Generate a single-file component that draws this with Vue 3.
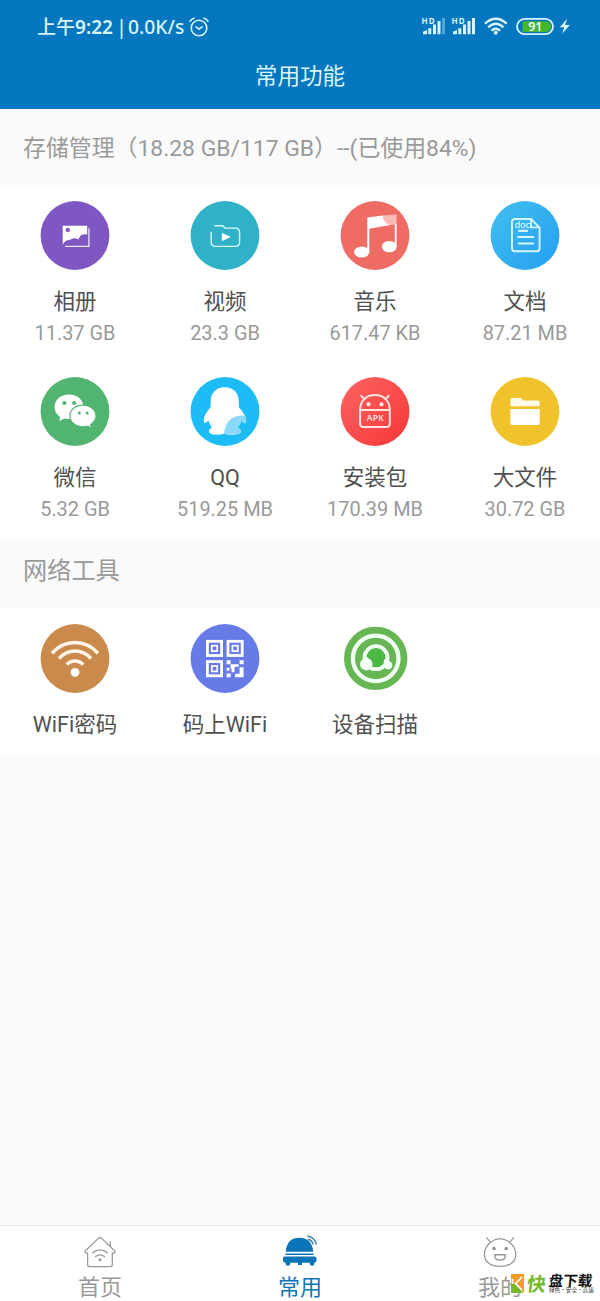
<script setup>
const storage = [
  { icon: 'album', label: '相册', size: '11.37 GB' },
  { icon: 'video', label: '视频', size: '23.3 GB' },
  { icon: 'music', label: '音乐', size: '617.47 KB' },
  { icon: 'doc', label: '文档', size: '87.21 MB' },
  { icon: 'wechat', label: '微信', size: '5.32 GB' },
  { icon: 'qq', label: 'QQ', size: '519.25 MB' },
  { icon: 'apk', label: '安装包', size: '170.39 MB' },
  { icon: 'folder', label: '大文件', size: '30.72 GB' },
]
const network = [
  { icon: 'wifi', label: 'WiFi密码' },
  { icon: 'qr', label: '码上WiFi' },
  { icon: 'scan', label: '设备扫描' },
]
const sections = [
  { key: 'storage', title: '存储管理（18.28 GB/117 GB）--(已使用84%)', items: storage },
  { key: 'network', title: '网络工具', items: network },
]
</script>

<template>
  <div class="screen">
    <header class="top">
      <div class="status">
        <span class="clock">上午<span class="digits">9:22</span></span><span class="bar">|</span><span class="speed">0.0K/s</span>
        <svg class="alarm" width="20" height="20" viewBox="0 0 20 20" fill="none" stroke="#d8f4ff" stroke-width="1.6" stroke-linecap="round">
          <circle cx="10" cy="11" r="7.8" />
          <path d="M1 4.2 Q2.4 2 5 1.2M19 4.2Q17.6 2 15 1.2M7.2 9.8l2.8 2.4 3-2.4" />
        </svg>
        <svg class="indicators" width="152" height="24" viewBox="0 0 152 24">
          <g class="sig">
            <text x="1.5" y="8.7" textLength="13">HD</text>
            <path d="M3 19.2v-2.4l4-1.8v4.2zM8.3 19.2v-6h3v6zM13 19.2V9.5h3v9.7zM17.5 19.2V6h3v13.2z" />
            <path opacity=".38" d="M22 19.2V3h3v16.2z" />
          </g>
          <g class="sig" transform="translate(30 0)">
            <text x="1.5" y="8.7" textLength="13">HD</text>
            <path d="M3 19.2v-2.4l4-1.8v4.2zM8.3 19.2v-6h3v6zM13 19.2V9.5h3v9.7zM17.5 19.2V6h3v13.2zM22 19.2V3h3v16.2z" />
          </g>
          <g fill="none" stroke="#d8f4ff" stroke-width="2.4">
            <path d="M64.9 8.7Q75.8-1.3 86.7 8.7M68.2 12.3Q75.8 5.3 83.4 12.3M71.4 15.7Q75.8 11.8 80.2 15.7" />
          </g>
          <circle cx="75.8" cy="17.8" r="2" fill="#d8f4ff" />
          <rect x="97" y="3.8" width="36" height="15.4" rx="7.7" fill="none" stroke="#d8f4ff" stroke-width="1.8" />
          <path d="M102.500 6.200H126Q131 6.800 131 11.500T126 17H102.500Z" fill="#43b52f" />
          <text class="pct" x="115.3" y="15.9" text-anchor="middle">91</text>
          <path d="M147 3.8l-7.2 8.4h4.4l-2 6.6 7.6-8.8h-4.6z" fill="#d8f4ff" />
        </svg>
      </div>
      <h1>常用功能</h1>
    </header>

    <main>
      <section v-for="s in sections" :key="s.key" :class="s.key">
        <h2>{{ s.title }}</h2>
        <div class="grid">
          <div v-for="it in s.items" :key="it.icon" class="cell">
            <svg class="icon" width="70" height="70" viewBox="0 0 70 70">
              <template v-if="it.icon === 'album'">
                <circle cx="35" cy="34.5" r="34.4" fill="#7e57c2" />
                <path fill="#fff" fill-rule="evenodd" d="M22.7 24.8H47.2V33.6Q40.8 31.6 38.3 38.6Q34 35.6 29.5 39.2Q26.5 38.2 22.7 43.5ZM27.8 26.8a2.2 2.2 0 1 0 .01 0Z" />
                <path d="M48.9 27.2V45.4H25" fill="none" stroke="#eee6fa" stroke-width="1.3" />
              </template>
              <template v-else-if="it.icon === 'video'">
                <circle cx="35" cy="34.5" r="34.4" fill="#30b1c7" />
                <path d="M21.2 30.8V41Q21.2 45.4 25.6 45.4H45.2Q49.6 45.4 49.6 41V31.5Q49.6 27.1 45.2 27.1H35L32.7 24.7H24.5" fill="none" stroke="#d9fbff" stroke-width="1.4" />
                <path d="M31.8 31.7L40.7 36 31.8 40.3Z" fill="#fff" />
              </template>
              <template v-else-if="it.icon === 'music'">
                <circle cx="35" cy="34.5" r="34.4" fill="#ee6c64" />
                <path fill="#fff" d="M27.3 16.4L43 14.5Q43.5 21.5 50.5 24.1L29.3 27.7V51H27.3Z" />
                <path fill="#f9bbb5" d="M43 14.5L56.6 13.4V23.2L50.5 24.1Q43.5 21.5 43 14.5Z" />
                <path fill="#fff" d="M54.8 23H56.6V45.5H54.8Z" />
                <ellipse cx="21.7" cy="51" rx="7.6" ry="5.6" fill="#fff" />
                <ellipse cx="49.3" cy="45.6" rx="7.4" ry="5.7" fill="#fff" />
              </template>
              <template v-else-if="it.icon === 'doc'">
                <defs><linearGradient id="docg" x1="0" y1="0" x2="1" y2="1"><stop offset="0" stop-color="#41bfee" /><stop offset="1" stop-color="#259ff2" /></linearGradient></defs>
                <circle cx="35" cy="34.5" r="34.4" fill="url(#docg)" />
                <path d="M41 18H25Q22 18 22 21V47.3Q22 50.3 25 50.3H46.6Q49.6 50.3 49.6 47.3V26.6L41 18V26.4H49.6" fill="none" stroke="#d7f5ff" stroke-width="1.9" stroke-linejoin="round" />
                <path d="M29 29.8H37.2M28.2 36H43.2M28.8 42.5H43.2" stroke="#d7f5ff" stroke-width="2.2" stroke-linecap="round" />
                <text x="24.6" y="26.8" class="doc-text" textLength="15.6">doc</text>
              </template>
              <template v-else-if="it.icon === 'wechat'">
                <circle cx="35" cy="34.5" r="34.4" fill="#51b471" />
                <path fill="#fff" d="M29 17.4c-8.300 0-14.500 5.300-14.500 12.600 0 4 2 7.300 5.400 9.700L19.400 44l5-2.600c1.500.5 3 .7 4.600.7 8.300 0 14.500-5 14.500-12.100S37.300 17.400 29 17.400Z" />
                <path fill="#fff" stroke="#51b471" stroke-width="1.1" d="M43 28.100c-7.400 0-13.100 4.800-13.100 10.900S35.600 49.900 43 49.900c1.700 0 3.400-.3 4.900-.8L51.300 51.700l-.7-4.200c3.300-2 5.400-5 5.400-8.500 0-6.100-5.700-10.900-13-10.900Z" />
                <g fill="#51b471"><circle cx="24.400" cy="26" r="2.100" /><circle cx="34.200" cy="26" r="2.100" /><circle cx="39.300" cy="36" r="1.500" /><circle cx="47.200" cy="36" r="1.500" /></g>
              </template>
              <template v-else-if="it.icon === 'qq'">
                <circle cx="35" cy="34.5" r="34.4" fill="#1dbcf7" />
                <path fill="#fff" d="M34.700 10.300C25.800 10.300 20.700 16.500 20.700 24.500V30Q13 39 13.700 44Q14.200 48 18.500 43.500Q19.500 47.500 22 50.500Q18.600 52.300 19 54.800C19.500 58.500 30.500 58.300 34.200 56.500C38 58.300 50.500 58.500 50.800 54.500Q51 52.200 47.500 50.500Q50.500 47.500 51.300 43.500Q55.300 47.800 56 44Q56.500 39 48.800 30V24.500C48.800 16.500 43.600 10.300 34.700 10.300Z" />
                <path fill="#8bd8fb" d="M34 56.500Q35.500 40.500 50 38.500Q54.500 38 55.800 39.500Q57.300 46 54.500 46.500L51.300 43.700Q50.500 47.500 47.700 50.500Q51 52.500 50.800 54.500Q50 57.600 42.500 57.600Q37 57.800 34 56.500Z" />
              </template>
              <template v-else-if="it.icon === 'apk'">
                <defs><linearGradient id="apkg" x1="0" y1="0" x2="1" y2="1"><stop offset="0" stop-color="#fc6563" /><stop offset="1" stop-color="#f73637" /></linearGradient></defs>
                <circle cx="35" cy="34.5" r="34.4" fill="url(#apkg)" />
                <path d="M20.100 33V46.500Q20.100 50 23.600 50H46.300Q49.800 50 49.800 46.500V33C49.800 24 44 18 35 18S20.100 24 20.100 33H49.800M24.700 22.200L21.200 18.800M45.300 22.200L48.800 18.800" fill="none" stroke="#ffe4e1" stroke-width="1.900" stroke-linecap="round" />
                <circle cx="28.500" cy="27.300" r="2" fill="#fff" /><circle cx="41.500" cy="27.300" r="2" fill="#fff" />
                <text x="26.700" y="44.300" class="apk-text" textLength="17">APK</text>
              </template>
              <template v-else-if="it.icon === 'folder'">
                <circle cx="35" cy="34.5" r="34.4" fill="#f0c32c" />
                <path fill="#fffbea" d="M20.400 29.300V22.800Q20.400 21 22.200 21H31L33.300 23.400H47.900Q49.700 23.400 49.700 25.200V29.300Z" />
                <path fill="#fff" d="M20.400 32H49.700V46.300Q49.700 48 48 48H22.100Q20.400 48 20.400 46.300Z" />
              </template>
              <template v-else-if="it.icon === 'wifi'">
                <circle cx="35" cy="34.5" r="34.4" fill="#c98a4c" />
                <path d="M12 29.300C25 15 45 15 58 29.300M19 34.500C28 24.500 42 24.500 51 34.500M26.800 40.600C31 35.700 39 35.700 43.200 40.600" fill="none" stroke="#fff5e8" stroke-width="3.500" />
                <circle cx="35" cy="48.300" r="4.400" fill="#fff" />
              </template>
              <template v-else-if="it.icon === 'qr'">
                <circle cx="35" cy="34.5" r="34.4" fill="#677be7" />
                <g fill="none" stroke="#fff" stroke-width="2.800"><rect x="17.400" y="17.300" width="14.200" height="14.200" /><rect x="38" y="17.300" width="14.200" height="14.200" /><rect x="17.400" y="37.600" width="14.200" height="14.200" /></g>
                <g fill="none" stroke="#fff" stroke-width="1.700"><rect x="21.800" y="21.700" width="5.400" height="5.400" /><rect x="42.400" y="21.700" width="5.400" height="5.400" /><rect x="21.800" y="42" width="5.400" height="5.400" /></g>
                <path fill="#fff" d="M36.600 36.200h4v4h-4zM40.600 40.200h4v8h-3v-3.500h-1zM44.600 40.200h4v2.500h-4zM49.600 36.200h4v4h-4zM36.600 43.800h3v3h-3zM36.600 49.500h4v3.700h-4zM49.600 43.200h4v10h-8.500v-3.500h4.500z" />
              </template>
              <template v-else>
                <circle cx="35.700" cy="34.400" r="31.700" fill="#67b654" />
                <circle cx="35.700" cy="34.400" r="22.800" fill="none" stroke="#effff0" stroke-width="4.300" />
                <circle cx="36" cy="33.700" r="11.500" fill="#4bb843" stroke="#f2fff2" stroke-width="3.800" />
                <path d="M26.500 35.500L23 39M46 37L49 40" stroke="#f2fff2" stroke-width="4.500" stroke-linecap="round" />
                <circle cx="26.300" cy="40.200" r="6.200" fill="#f2fff2" />
                <circle cx="48.200" cy="41.300" r="4.100" fill="#f2fff2" />
              </template>
            </svg>
            <div class="label">{{ it.label }}</div>
            <div v-if="it.size" class="size">{{ it.size }}</div>
          </div>
        </div>
      </section>
    </main>

    <nav>
      <div class="tab">
        <svg width="36" height="36" viewBox="0 0 36 36" fill="none" stroke="#999" stroke-width="1.300" stroke-linejoin="round" stroke-linecap="round">
          <path d="M5.600 19V30.500Q5.600 32.600 7.700 32.600H28.200Q30.300 32.600 30.300 30.500V19M5.600 19Q1.500 19.300 3.400 16.800L16.400 4.400Q18 3 19.600 4.400L32.600 16.800Q34.500 19.300 30.300 19M28.400 12.500V8" />
          <path d="M10.600 18.800Q18 13 25.400 18.800M13.500 22.600Q18 19.100 22.500 22.600" /><circle cx="18" cy="25.800" r=".9" fill="#999" />
        </svg>
        <span>首页</span>
      </div>
      <div class="tab active">
        <svg width="36" height="36" viewBox="0 0 36 36">
          <path fill="#0b75b9" d="M3.800 17.800C4.500 8 9.700 3.800 17.400 3.800S30.500 8 31.200 17.800ZM3.500 19.500H31.500V21H3.500ZM2.500 22.500H32.500Q34.500 22.500 34.500 24.500V26.500Q34.500 28.500 32.500 28.500L31.800 31.500H28.500L27.500 28.800H20V31H16V28.800H8.500L7.500 31.500H4.200L3.200 28.500Q1 28.300 1 26.500V24.500Q1 22.500 2.500 22.500Z" />
          <path d="M25.300 2Q32.800 3.200 34.300 10.500M26 5.200Q30.300 6.300 31.300 10.500" fill="none" stroke="#3d81a9" stroke-width="1.400" />
        </svg>
        <span>常用</span>
      </div>
      <div class="tab">
        <svg width="36" height="36" viewBox="0 0 36 36" fill="none" stroke="#999" stroke-width="1.300" stroke-linecap="round" stroke-linejoin="round">
          <path d="M18.100 4.800C26 4.800 33.800 12 33.800 20.500 33.800 28 27.500 32.400 18.100 32.400S2.400 28 2.400 20.500C2.400 12 10.200 4.800 18.100 4.800ZM8.200 7.800L4.800 3.800M28 7.800L31.400 3.800" />
          <path d="M12.800 20.700H23.400Q24 26 18.100 26T12.800 20.700Z" stroke-width="1.500" />
          <circle cx="12" cy="14.500" r="1.200" fill="#999" /><circle cx="24.200" cy="14.500" r="1.200" fill="#999" />
        </svg>
        <span>我的</span>
      </div>
      <div class="watermark">
        <svg width="13" height="19" viewBox="0 0 13 19">
          <path fill="#f59a23" d="M0 0H13V19L5 10 0 9Z" /><path fill="#76b82a" d="M0 8L5 10 12 19H0Z" />
          <path d="M11 3L4.500 9.500 11 16M1.500 5V10" fill="none" stroke="#fff" stroke-width="1.700" />
        </svg>
        <b class="kuai">快</b>
        <div class="wm-text"><b>盘下载</b><small>绿色·安全·高速</small></div>
      </div>
    </nav>
  </div>
</template>

<style>
body { margin: 0; }
</style>

<style scoped>
.screen { width: 600px; height: 1301px; display: flex; flex-direction: column; background: #fafafa; font-family: Roboto, "Noto Sans CJK SC", sans-serif; overflow: hidden; }
.top { height: 109px; box-sizing: border-box; background: #0577be; color: #d8f4ff; flex: none; }
.status { height: 54px; display: flex; align-items: center; padding-left: 37px; font-family: "Noto Sans", "Noto Sans CJK SC", sans-serif; font-size: 19px; font-weight: 500; line-height: 28px; white-space: nowrap; }
.clock { width: 78px; }
.digits { font-weight: 600; }
.bar { width: 13px; text-align: center; }
.speed { width: 58px; font-size: 19.300px; }
.alarm { margin-left: 3px; }
.indicators { margin-left: 211px; }
.sig { fill: #d8f4ff; }
.sig text { font: 700 8px "Noto Sans", sans-serif; }
.pct { fill: #effff0; font: 600 12.500px "Noto Sans", sans-serif; }
h1 { margin: 7px 0 0; font-size: 22.600px; font-weight: 400; line-height: 32px; text-align: center; }
main { flex: 1; }
h2 { margin: 0; height: 76px; line-height: 79px; padding-left: 23px; color: #999; font-size: 22.900px; font-weight: 400; white-space: nowrap; }
.network h2 { height: 71px; line-height: 68px; font-size: 24.200px; }
.grid { display: grid; grid-template-columns: repeat(4, 150px); background: #fff; }
.cell { height: 176px; box-sizing: border-box; padding-top: 16px; display: flex; flex-direction: column; align-items: center; }
.network .cell { height: 145px; }
.icon { display: block; }
.label { margin-top: 17px; font-size: 21.500px; line-height: 28px; color: #505050; }
.size { margin-top: 6px; font-size: 19.900px; line-height: 24px; color: #999; }
.doc-text { fill: #d7f5ff; font: 500 9.500px "Noto Sans", sans-serif; }
.apk-text { fill: #ffe4e1; font: 600 8.500px "Noto Sans", sans-serif; }
nav { position: relative; height: 76px; box-sizing: border-box; border-top: 1px solid #e4e4e4; background: #fff; display: grid; grid-template-columns: repeat(3, 1fr); }
.tab { display: flex; flex-direction: column; align-items: center; padding-top: 8px; color: #999; font-size: 22px; line-height: 30px; }
.tab svg { display: block; margin-bottom: 3px; }
.active { color: #0b75b9; }
.watermark { position: absolute; left: 511px; top: 46px; display: flex; align-items: center; height: 22px; font-family: "Noto Sans CJK SC", sans-serif; }
.kuai { margin-left: 3px; width: 20px; color: #76b82a; font-size: 19px; line-height: 20px; transform: skewX(-8deg); }
.wm-text { margin-left: 2px; white-space: nowrap; }
.wm-text b { display: block; font-size: 14.500px; line-height: 14px; font-weight: 700; color: #111; transform: skewX(-6deg); }
.wm-text small { display: block; height: 6px; font-size: 5.600px; line-height: 7px; color: #333; }
</style>
